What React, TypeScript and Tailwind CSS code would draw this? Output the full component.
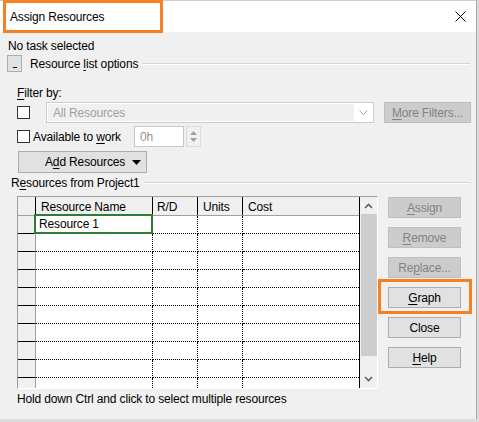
import React from 'react';

// mnemonic letter, underlined like a Windows access key
function U({ children }: { children: React.ReactNode }) {
  return <span className="underline decoration-1 underline-offset-[2px]">{children}</span>;
}

function SideButton({ children, disabled }: { children: React.ReactNode; disabled?: boolean }) {
  return (
    <div
      className={
        disabled
          ? 'w-[73px] h-[21px] flex items-center justify-center border border-[#bfbfbf] bg-[#cccccc] text-[#838383]'
          : 'w-[73px] h-[21px] flex items-center justify-center border border-[#adadad] bg-[#e1e1e1] text-black'
      }
    >
      {children}
    </div>
  );
}

function Check() {
  return <div className="w-[13px] h-[13px] border border-[#333333] bg-white shrink-0" />;
}

function Chevron({ up }: { up?: boolean }) {
  return (
    <svg width="9" height="6" viewBox="0 0 9 6">
      <polyline
        points={up ? '1,5 4.5,1.5 8,5' : '1,1 4.5,4.5 8,1'}
        fill="none"
        stroke="#606060"
        strokeWidth="1.6"
      />
    </svg>
  );
}

export default function App() {
  const rows = [0, 1, 2, 3, 4, 5, 6, 7, 8];

  return (
    <div className="relative w-[479px] h-[422px] overflow-hidden bg-[#dcdcdc] font-['Liberation_Sans',Arial,sans-serif] text-[12px] tracking-[-0.15px] text-black">
      <div className="w-[477px] h-[419px] flex flex-col bg-[#f0f0f0] border-r border-[#a8a8a8]">
        {/* title bar */}
        <div className="h-[32px] shrink-0 bg-white border-t border-[#cfcfcf] flex items-center justify-between pl-[10px] pr-[10px]">
          <span className="text-[12px] pt-[1px]">Assign Resources</span>
          <svg width="11" height="11" viewBox="0 0 11 11">
            <path d="M0.5 0.5 L10.5 10.5 M10.5 0.5 L0.5 10.5" stroke="#000" strokeWidth="1" />
          </svg>
        </div>

        <div className="h-[16px] mt-[6px] ml-[8px] leading-[16px]">No task selected</div>

        {/* resource list options */}
        <div className="mt-[1px] h-[17px] flex items-center">
          <div className="ml-[7px] w-[15px] h-[17px] border border-[#adadad] bg-[#e1e1e1] flex items-end justify-center pb-[3px]">
            <div className="w-[4px] h-px bg-black" />
          </div>
          <span className="ml-[8px]">
            Resource <U>l</U>ist options
          </span>
          <div className="flex-1 ml-[4px] mr-[6px] h-[2px] border-t border-[#d5d5d5] border-b border-b-white" />
        </div>

        <div className="mt-[13px] h-[16px] ml-[17px] leading-[16px]">
          <U>F</U>ilter by:
        </div>

        {/* filter row */}
        <div className="mt-[1px] h-[21px] flex items-center">
          <div className="ml-[17px]">
            <Check />
          </div>
          <div className="ml-[16px] w-[328px] h-[21px] border border-[#cccccc] bg-white p-px flex">
            <div className="flex-1 bg-[#f0f0f0] flex items-center pl-[5px] text-[#a0a0a0]">All Resources</div>
            <div className="w-[18px] flex items-center justify-center">
              <svg width="9" height="5" viewBox="0 0 9 5">
                <polyline points="0.5,0.5 4.5,4.5 8.5,0.5" fill="none" stroke="#a8a8a8" strokeWidth="1" />
              </svg>
            </div>
          </div>
          <div className="ml-[10px] w-[87px] h-[21px] border border-[#bfbfbf] bg-[#cccccc] text-[#838383] flex items-center justify-center">
            <span>
              <U>M</U>ore Filters...
            </span>
          </div>
        </div>

        {/* available to work row */}
        <div className="mt-[3px] h-[21px] flex items-center">
          <div className="ml-[17px]">
            <Check />
          </div>
          <span className="ml-[3px] w-[98px]">
            Available to <U>w</U>ork
          </span>
          <div className="ml-[3px] w-[50px] h-[21px] border border-[#c8c8c8] bg-white flex items-center pl-[5px] text-[#9c9483]">
            0h
          </div>
          <div className="ml-[2px] w-[15px] h-[21px] border border-[#dadada] flex flex-col items-center justify-center gap-[3px]">
            <svg width="7" height="4" viewBox="0 0 7 4">
              <polygon points="0,4 3.5,0 7,4" fill="#a0a0a0" />
            </svg>
            <svg width="7" height="4" viewBox="0 0 7 4">
              <polygon points="0,0 3.5,4 7,0" fill="#a0a0a0" />
            </svg>
          </div>
        </div>

        {/* add resources */}
        <div className="mt-[4px] h-[22px] flex">
          <div className="ml-[18px] w-[129px] h-[22px] border border-[#adadad] bg-[#e1e1e1] flex items-center">
            <span className="ml-[26px]">
              A<U>d</U>d Resources
            </span>
            <svg className="ml-auto mr-[5px]" width="9" height="5" viewBox="0 0 9 5">
              <polygon points="0,0 4.5,5 9,0" fill="#000" />
            </svg>
          </div>
        </div>

        {/* resources from project1 */}
        <div className="mt-[2px] h-[16px] flex items-center">
          <span className="ml-[11px]">
            R<U>e</U>sources from Project1
          </span>
          <div className="flex-1 ml-[4px] mr-[6px] h-[2px] border-t border-[#d5d5d5] border-b border-b-white" />
        </div>

        {/* grid + buttons */}
        <div className="mt-[5px] flex">
          <div className="ml-[17px] w-[361px] h-[193px] flex border-t border-l border-[#a0a0a0] border-r border-r-white border-b border-b-white">
            <div className="flex flex-col w-[341px] bg-white">
              <div className="flex h-[19px] bg-[#f0f0f0] border-b border-[#a0a0a0]">
                <div className="w-[18px] border-r border-black" />
                <div className="w-[117px] border-r border-black pl-[5px] pt-[2px] leading-[16px]">Resource Name</div>
                <div className="w-[45px] border-r border-black pl-[4px] pt-[2px] leading-[16px]">R/D</div>
                <div className="w-[45px] border-r border-black pl-[5px] pt-[2px] leading-[16px]">Units</div>
                <div className="w-[116px] pl-[5px] pt-[2px] leading-[16px]">Cost</div>
              </div>
              {rows.map(i => (
                <div key={i} className="flex h-[18px]">
                  <div className="w-[18px] bg-[#f0f0f0] border-b border-b-black border-r border-r-[#a0a0a0]" />
                  <div className="relative w-[117px] border-r border-b border-dotted border-black pl-[3px] leading-[17px]">
                    {i === 0 && (
                      <>
                        Resource 1
                        <div className="absolute -left-[2px] -top-[2px] -right-[1px] -bottom-[1px] border-2 border-[#2f7d32]" />
                      </>
                    )}
                  </div>
                  <div className="w-[45px] border-r border-b border-dotted border-black" />
                  <div className="w-[45px] border-r border-b border-dotted border-black" />
                  <div className="w-[116px] border-b border-dotted border-black" />
                </div>
              ))}
              <div className="flex h-[10px]">
                <div className="w-[18px] bg-[#f0f0f0] border-r border-[#a0a0a0]" />
                <div className="w-[117px] border-r border-dotted border-black" />
                <div className="w-[45px] border-r border-dotted border-black" />
                <div className="w-[45px] border-r border-dotted border-black" />
                <div className="w-[116px]" />
              </div>
            </div>
            {/* scrollbar */}
            <div className="w-[18px] flex flex-col bg-[#f0f0f0] border-l border-black">
              <div className="h-[17px] flex items-center justify-center">
                <Chevron up />
              </div>
              <div className="h-[142px] ml-[1px] bg-[#cdcdcd]" />
              <div className="flex-1 flex items-end justify-center pb-[6px]">
                <Chevron />
              </div>
            </div>
          </div>

          <div className="ml-[10px] mt-[1px] flex flex-col gap-[9px]">
            <SideButton disabled>
              <span>
                <U>A</U>ssign
              </span>
            </SideButton>
            <SideButton disabled>
              <span>
                <U>R</U>emove
              </span>
            </SideButton>
            <SideButton disabled>
              <span>
                Re<U>p</U>lace...
              </span>
            </SideButton>
            <SideButton>
              <span>
                <U>G</U>raph
              </span>
            </SideButton>
            <SideButton>
              <span>Close</span>
            </SideButton>
            <SideButton>
              <span>
                <U>H</U>elp
              </span>
            </SideButton>
          </div>
        </div>

        <div className="mt-[2px] h-[16px] ml-[17px] leading-[16px]">Hold down Ctrl and click to select multiple resources</div>
      </div>

      {/* annotation highlights */}
      <div className="absolute left-[3px] top-0 w-[160px] h-[33px] border-[3px] border-[#f58025]" />
      <div className="absolute left-[378px] top-[279px] w-[94px] h-[35px] border-[3px] border-[#f58025]" />
    </div>
  );
}
